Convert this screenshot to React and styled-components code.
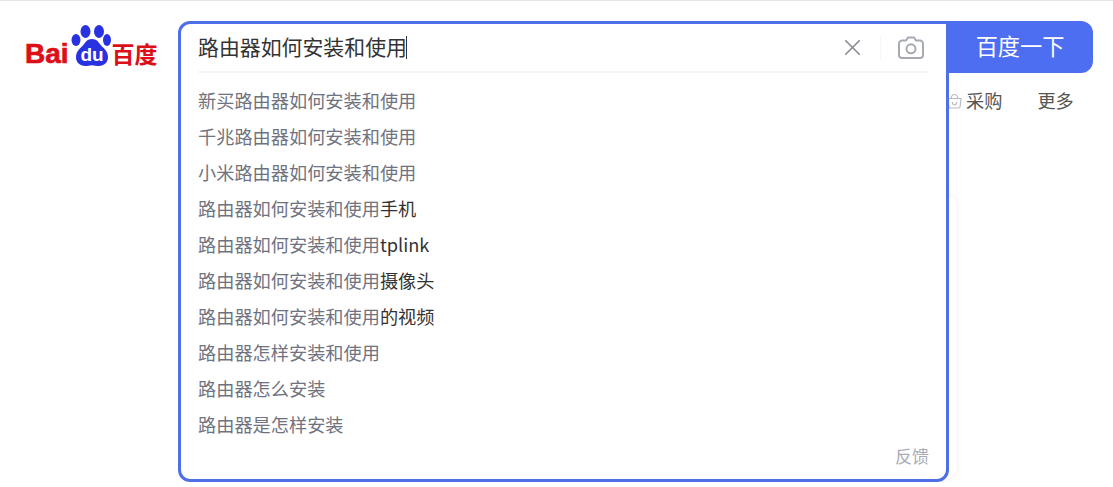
import React from "react";
import styled, { createGlobalStyle } from "styled-components";
import { X } from "lucide-react";

const suggestions = [
  ["新买路由器如何安装和使用", ""],
  ["千兆路由器如何安装和使用", ""],
  ["小米路由器如何安装和使用", ""],
  ["路由器如何安装和使用", "手机"],
  ["路由器如何安装和使用", "tplink"],
  ["路由器如何安装和使用", "摄像头"],
  ["路由器如何安装和使用", "的视频"],
  ["路由器怎样安装和使用", ""],
  ["路由器怎么安装", ""],
  ["路由器是怎样安装", ""],
];

const App = () => (
  <>
    <GlobalStyle />
    <Page>
      <LogoLink>
        <LogoWord>Bai</LogoWord>
        <Paw viewBox="0 0 40 42" aria-hidden="true">
          <ellipse cx="14.5" cy="6.500" rx="5" ry="6.500" fill="#2932e1" />
          <ellipse cx="28" cy="6.500" rx="5" ry="6.500" fill="#2932e1" />
          <ellipse cx="5" cy="15" rx="4.500" ry="6" fill="#2932e1" />
          <ellipse cx="36" cy="15" rx="4" ry="6" fill="#2932e1" />
          <path
            d="M21 14c4.500 0 6.500 2.800 8.500 5.800 2 2.700 7.500 5.700 7.500 12.200 0 5.500-4 9-9 9-2.500 0-5-.8-7-.8s-4.500.8-7 .8c-5 0-9-3.500-9-9 0-6.500 5.500-9.500 7.500-12.200 2-3 4-5.800 8.500-5.800z"
            fill="#2932e1"
          />
          <PawText x="21" y="36" textAnchor="middle">du</PawText>
        </Paw>
        <LogoHan>百度</LogoHan>
      </LogoLink>

      <SearchSlot>
        <ResultCard />
        <SearchPanel>
          <InputRow>
            <Query>
              路由器如何安装和使用
              <Caret />
            </Query>
            <ClearIcon size={27} strokeWidth={1.5} />
            <IconDivider />
            <CameraIcon viewBox="0 0 26 23" aria-hidden="true">
              <path d="M8 4.500 10 1.500h6l2 3h4a3 3 0 0 1 3 3V19a3 3 0 0 1-3 3H4a3 3 0 0 1-3-3V7.500a3 3 0 0 1 3-3z" />
              <circle cx="13" cy="12.800" r="4.500" />
            </CameraIcon>
          </InputRow>
          <SuggestList>
            {suggestions.map(([match, rest], index) => (
              <SuggestRow key={index}>
                {match}
                {rest && <Rest>{rest}</Rest>}
              </SuggestRow>
            ))}
          </SuggestList>
          <Feedback>反馈</Feedback>
        </SearchPanel>
      </SearchSlot>

      <SideColumn>
        <SearchButton>百度一下</SearchButton>
        <NavRow>
          <NavItem>
            <BasketIcon viewBox="0 0 16 17" aria-hidden="true">
              <path d="M4.500 5.500C4.800 3 6.200 1.500 8 1.500s3.200 1.500 3.500 4" />
              <path d="M1 5.800h14l-1 8.200a2 2 0 0 1-2 2H4a2 2 0 0 1-2-2z" />
              <path d="M5.500 9.500c.3 2.200 1.300 3.300 2.500 3.300s2.200-1.100 2.500-3.300" />
            </BasketIcon>
            采购
          </NavItem>
          <NavItem>更多</NavItem>
        </NavRow>
      </SideColumn>
    </Page>
  </>
);

export default App;

const GlobalStyle = createGlobalStyle`
  html, body {
    margin: 0;
    background: #fff;
  }
  body {
    font-family: "Noto Sans CJK SC", "Liberation Sans", sans-serif;
  }
`;

const Page = styled.div`
  display: flex;
  align-items: flex-start;
  box-sizing: border-box;
  width: 1113px;
  height: 487px;
  padding: 20px 0 0 25px;
  border-top: 1px solid #e6e6e6;
  overflow: hidden;
`;

const LogoLink = styled.a`
  display: flex;
  align-items: flex-end;
  width: 153px;
  height: 46px;
  flex-shrink: 0;
`;

const LogoWord = styled.span`
  font-family: "Liberation Sans", sans-serif;
  font-weight: 700;
  font-size: 28px;
  line-height: 27px;
  color: #dc0f18;
  -webkit-text-stroke: 0.7px #dc0f18;
`;

const LogoHan = styled.span`
  font-weight: 700;
  font-size: 23px;
  line-height: 27px;
  color: #dc0f18;
`;

const Paw = styled.svg`
  width: 40px;
  height: 42px;
  margin: 0 1px 0 2px;
`;

const PawText = styled.text`
  font-family: "Liberation Sans", sans-serif;
  font-weight: 700;
  font-size: 19px;
  fill: #fff;
`;

const SearchSlot = styled.div`
  position: relative;
  width: 771px;
  height: 461px;
  flex-shrink: 0;
  z-index: 1;
`;

/* the faint result card peeking out behind the dropdown */
const ResultCard = styled.div`
  position: absolute;
  top: 174px;
  bottom: 3px;
  right: -8px;
  width: 60px;
  border-radius: 12px;
  box-shadow: 0 0 5px rgba(150, 90, 90, 0.14);
`;

const SearchPanel = styled.div`
  position: relative;
  box-sizing: border-box;
  height: 100%;
  background: #fff;
  border: 3px solid #4e6fe8;
  border-radius: 12px 0 12px 12px;
  padding: 0 17px;
  display: flex;
  flex-direction: column;
`;

const InputRow = styled.div`
  display: flex;
  align-items: center;
  height: 47px;
  border-bottom: 2px solid #f5f5f6;
  flex-shrink: 0;
`;

const Query = styled.div`
  flex: 1;
  display: flex;
  align-items: center;
  margin-top: -3px;
  font-size: 20.900px;
  line-height: 28px;
  color: #333;
`;

const Caret = styled.span`
  width: 1px;
  height: 23px;
  margin: 2px 0 0 -1px;
  background: #333;
`;

const ClearIcon = styled(X)`
  color: #8b8e99;
  margin: -1px 0 0 0;
`;

const IconDivider = styled.span`
  width: 1px;
  height: 24px;
  margin: 0 17px 0 14px;
  background: #f5f5f6;
`;

const CameraIcon = styled.svg`
  width: 26px;
  height: 23px;
  margin: -1px 5px 0 0;
  fill: none;
  stroke: #a7aab5;
  stroke-width: 2;
`;

const SuggestList = styled.ul`
  list-style: none;
  margin: 9px 0 0;
  padding: 0;
`;

const SuggestRow = styled.li`
  height: 36px;
  font-size: 18.200px;
  line-height: 36px;
  color: #70737f;
`;

const Rest = styled.span`
  color: #333;
`;

const Feedback = styled.div`
  align-self: flex-end;
  margin-top: -1px;
  font-size: 17px;
  line-height: 30px;
  color: #a7aab5;
`;

const SideColumn = styled.div`
  display: flex;
  flex-direction: column;
  width: 144px;
`;

const SearchButton = styled.button`
  box-sizing: border-box;
  width: 144px;
  height: 52px;
  border: 0;
  padding: 0 0 4px;
  border-radius: 0 12px 12px 0;
  background: #4e6ef2;
  color: #fff;
  font-family: inherit;
  font-size: 22.200px;
  text-indent: -2px;
`;

const NavRow = styled.div`
  display: flex;
  gap: 35px;
  margin: 13px 0 0 -2px;
`;

const NavItem = styled.span`
  display: flex;
  align-items: center;
  font-size: 18.200px;
  line-height: 28px;
  color: #555;
`;

const BasketIcon = styled.svg`
  width: 15px;
  height: 16px;
  margin: 2px 4px 0 0;
  fill: none;
  stroke: #b8bac2;
  stroke-width: 1.200;
`;
